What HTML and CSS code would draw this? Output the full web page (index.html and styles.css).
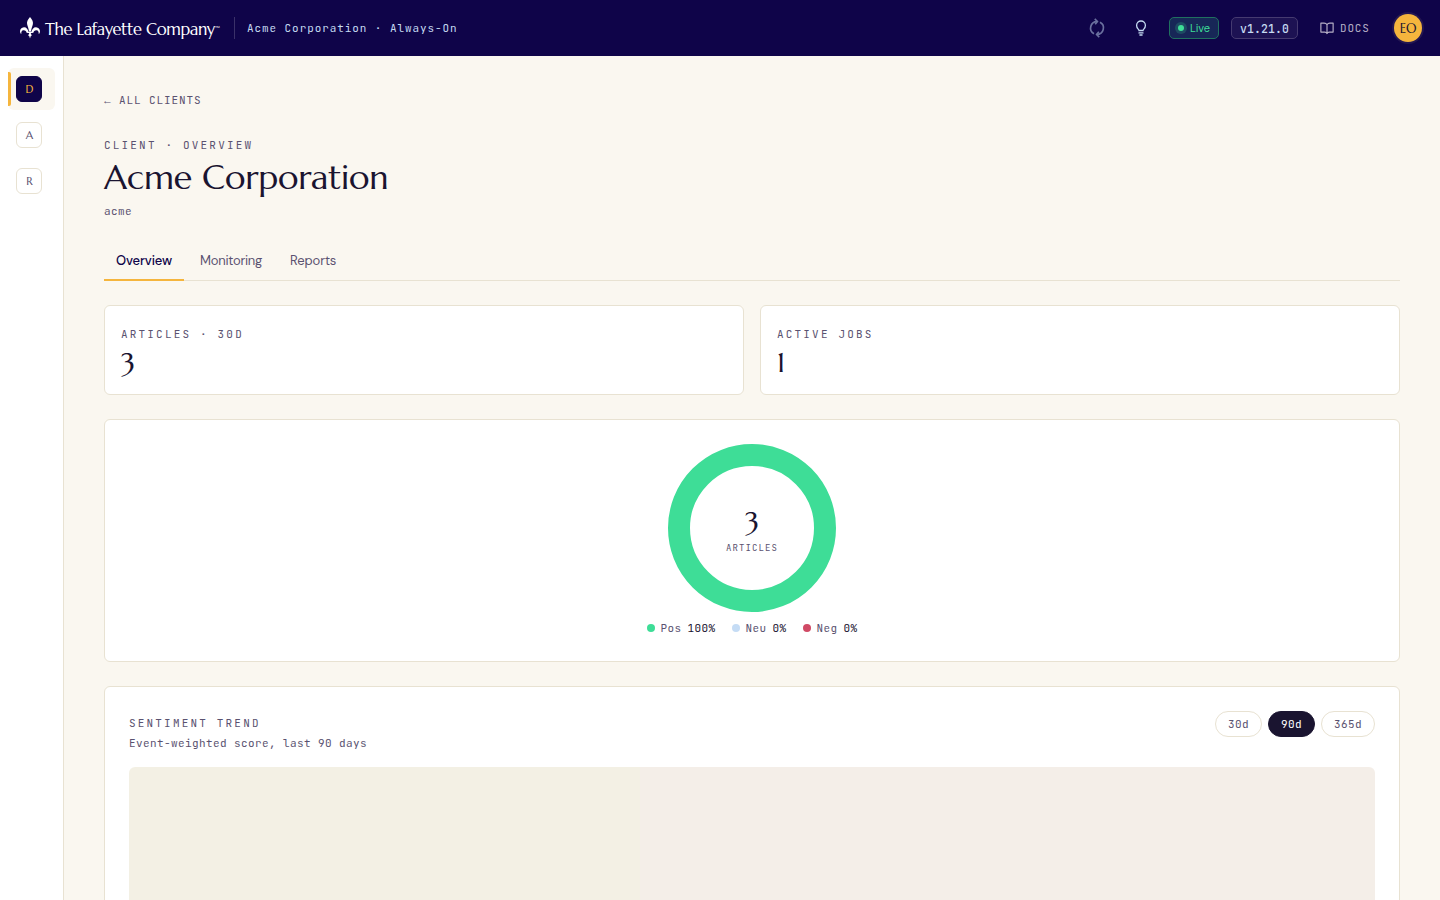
FILE: index.html
```html
<!DOCTYPE html>
<html lang="en">
<head>
    <meta charset="UTF-8">
    <title>Acme Corporation - The Lafayette Company</title>
    <link rel="stylesheet" href="styles.css">
</head>
<body>
    <header class="topbar">
        <a class="brand">
            <svg class="fleur" width="20" height="22" viewBox="0 0 20 22" fill="#fff">
                <path d="M10 0C7.700 2.800 6.500 5 7.200 7.500 7.700 9.500 8.600 11 9 14.500h2c.4-3.500 1.300-5 1.800-7C13.500 5 12.300 2.800 10 0z"/>
                <path d="M8.600 15.500C8.200 12 6.200 10 3.900 10.200 1.200 10.400-.6 13 .2 15.500c.2.700.6 1.200 1.100 1.500C1.200 15 1.700 13.400 3.400 13.300c2-.1 3 1.200 3.400 2.800z"/>
                <path d="M11.400 15.500c.4-3.500 2.400-5.500 4.700-5.300 2.700.2 4.500 2.800 3.700 5.300-.2.700-.6 1.200-1.100 1.500.1-2-.4-3.600-2.100-3.700-2-.1-3 1.200-3.400 2.800z"/>
                <path d="M7.500 14.700h5v1.200h-5zM9.200 16h1.600c.1 1.300.6 1.800 1.200 2.200L10.800 19 10 21.500 9.200 19 8 18.200c.6-.4 1.100-.9 1.200-2.200z"/>
            </svg>
            <span class="brand-name">The Lafayette Company</span><span class="tm">™</span>
        </a>
        <span class="context">Acme Corporation · Always-On</span>
        <div class="actions">
            <button class="icon-btn sync">
                <svg width="20" height="20" viewBox="0 0 24 24" fill="none" stroke="currentColor" stroke-width="2">
                    <path d="M12 4.300A7.700 7.700 0 0 0 8.400 18.800M12 19.700A7.700 7.700 0 0 0 15.600 5.200"/>
                    <path d="M9.300 1l3.200 3.200-2.700 3.400M14.700 23l-3.200-3.200 2.700-3.400"/>
                </svg>
            </button>
            <button class="icon-btn">
                <svg width="16" height="16" viewBox="0 0 16 16" fill="none" stroke="currentColor" stroke-width="1.300" stroke-linecap="round">
                    <path d="M6 10.500C6 9.200 3.600 8.500 3.600 5.400a4.400 4.400 0 0 1 8.800 0C12.400 8.500 10 9.200 10 10.500zM6 12.900h4M6.900 15h2.200"/>
                </svg>
            </button>
            <span class="live"><i class="live-dot"></i>Live</span>
            <span class="version">v1.21.0</span>
            <a class="docs">
                <svg width="14" height="14" viewBox="0 0 24 24" fill="none" stroke="currentColor" stroke-width="2" stroke-linejoin="round">
                    <path d="M12 6.500C11 4.500 9 3.500 7 3.500H1.500v15.500H8c2 0 3.500.8 4 2.500.5-1.700 2-2.500 4-2.500h6.500V3.500H17c-2 0-4 1-5 3zM12 6.500v15"/>
                </svg>
                DOCS
            </a>
            <span class="avatar">EO</span>
        </div>
    </header>

    <div class="shell">
        <nav class="sidebar">
            <a class="side-item active"><span class="side-letter">D</span></a>
            <a class="side-item"><span class="side-letter">A</span></a>
            <a class="side-item"><span class="side-letter">R</span></a>
        </nav>

        <main class="content">
            <a class="back"><span class="arrow">←</span> ALL CLIENTS</a>
            <div class="label">CLIENT · OVERVIEW</div>
            <h1>Acme Corporation</h1>
            <div class="slug">acme</div>

            <div class="tabs">
                <a class="tab active">Overview</a>
                <a class="tab monitoring">Monitoring</a>
                <a class="tab">Reports</a>
            </div>

            <div class="stats">
                <div class="card stat">
                    <div class="label">ARTICLES · 30D</div>
                    <div class="stat-value">3</div>
                </div>
                <div class="card stat">
                    <div class="label">ACTIVE JOBS</div>
                    <div class="stat-value">1</div>
                </div>
            </div>

            <div class="card mix">
                <div class="donut">
                    <span class="donut-value">3</span>
                    <span class="donut-label">ARTICLES</span>
                </div>
                <div class="legend">
                    <span class="key"><i class="dot pos"></i>Pos <b>100%</b></span>
                    <span class="key"><i class="dot neu"></i>Neu <b>0%</b></span>
                    <span class="key"><i class="dot neg"></i>Neg <b>0%</b></span>
                </div>
            </div>

            <div class="card trend">
                <div class="trend-head">
                    <div>
                        <div class="label">SENTIMENT TREND</div>
                        <div class="trend-sub">Event-weighted score, last 90 days</div>
                    </div>
                    <div class="ranges">
                        <button class="range">30d</button>
                        <button class="range active">90d</button>
                        <button class="range">365d</button>
                    </div>
                </div>
                <div class="chart"></div>
            </div>
        </main>
    </div>
</body>
</html>
```

FILE: styles.css
```css
:root {
    --navy: #0f0449;
    --ink: #1a1430;
    --muted: #5a5270;
    --cream: #faf7f0;
    --line: #e8e2d2;
    --gold: #f5b53d;
    --green: #3edd97;
    --mono: "JetBrains Mono", "DejaVu Sans Mono", monospace;
    --serif: "Marcellus", "Liberation Serif", serif;
    --sans: "DM Sans", "Inter", sans-serif;
}

* {
    box-sizing: border-box;
}

body {
    margin: 0;
    height: 100vh;
    overflow: hidden;
    background: var(--cream);
    color: var(--ink);
    font-family: var(--sans);
}

button {
    font: inherit;
    background: none;
    border: none;
    padding: 0;
}

svg {
    display: block;
    flex-shrink: 0;
}

/* top bar */
.topbar {
    display: flex;
    align-items: center;
    height: 56px;
    padding: 0 18px 0 20px;
    background: var(--navy);
    color: #c5dbf2;
}

.brand {
    display: flex;
    align-items: center;
    width: 215px;
    height: 22px;
    border-right: 1px solid rgba(255,255,255,0.18);
    color: white;
    font-family: var(--serif);
}

.brand-name {
    margin-left: 5px;
    font-size: 16.5px;
    line-height: 22px;
    white-space: nowrap;
    letter-spacing: -0.4px;
    padding-top: 3px;
}

.tm {
    font-size: 7px;
}

.context {
    margin-left: 12px;
    font-family: var(--mono);
    font-size: 11px;
    letter-spacing: 0.92px;
}

.actions {
    display: flex;
    align-items: center;
    margin-left: auto;
}

.icon-btn {
    display: grid;
    place-items: center;
    width: 32px;
    height: 32px;
    margin-right: 12px;
    color: #c5dbf2;
}

.sync {
    opacity: 0.5;
}

.live,
.version {
    display: flex;
    align-items: center;
    height: 22px;
    border-radius: 5px;
    margin-right: 12px;
}

.live {
    width: 50px;
    padding-left: 8px;
    gap: 6px;
    border: 1px solid #20705f;
    background: #172757;
    color: var(--green);
    font-size: 11px;
    letter-spacing: -0.1px;
}

.live-dot {
    width: 6px;
    height: 6px;
    border-radius: 50%;
    background: var(--green);
    box-shadow: 0 0 0 3px rgba(62,221,151,0.2);
}

.version {
    width: 67px;
    padding-left: 8px;
    border: 1px solid #453a70;
    background: #1d1253;
    font-family: var(--mono);
    font-size: 11.5px;
    font-weight: 500;
    letter-spacing: 0.12px;
}

.docs {
    display: flex;
    align-items: center;
    gap: 6px;
    width: 68px;
    margin: 0 6px 0 10px;
    color: #b5aec5;
    font-family: var(--mono);
    font-size: 11px;
    letter-spacing: 0.8px;
}

.avatar {
    width: 28px;
    height: 28px;
    border-radius: 50%;
    background: var(--gold);
    box-shadow: 0 0 0 2px #241751;
    color: var(--ink);
    font-family: var(--serif);
    font-size: 13px;
    line-height: 29px;
    letter-spacing: -0.3px;
    text-align: center;
}

/* page shell */
.shell {
    display: flex;
    height: calc(100vh - 56px);
}

.sidebar {
    display: flex;
    flex-direction: column;
    gap: 4px;
    width: 64px;
    padding: 12px 8px;
    border-right: 1px solid var(--line);
    background: white;
}

.side-item {
    height: 42px;
    padding: 8px;
    border-radius: 6px;
}

.side-item.active {
    position: relative;
    background: var(--cream);
}

.side-item.active::before {
    content: "";
    position: absolute;
    left: 0;
    top: 4px;
    width: 3px;
    height: 34px;
    border-radius: 0 2px 2px 0;
    background: var(--gold);
}

.side-letter {
    display: block;
    width: 26px;
    height: 26px;
    padding-left: 1px;
    border: 1px solid var(--line);
    border-radius: 6px;
    color: var(--muted);
    font-family: var(--serif);
    font-size: 11px;
    line-height: 25px;
    text-align: center;
}

.active .side-letter {
    border-color: var(--navy);
    background: var(--navy);
    color: var(--gold);
}

.content {
    flex: 1;
    min-width: 0;
    padding: 36px 40px 0;
    overflow: hidden;
}

.back {
    display: block;
    height: 17px;
    margin-bottom: 28px;
    color: var(--muted);
    font-family: var(--mono);
    font-size: 11px;
    line-height: 17px;
    letter-spacing: 0.9px;
}

.arrow {
    font-family: "Liberation Mono", monospace;
    font-weight: bold;
}

.label {
    color: var(--muted);
    font-family: var(--mono);
    font-size: 11px;
    line-height: 17px;
    letter-spacing: 2.18px;
}

h1 {
    margin: 3px 0 4px;
    font-family: var(--serif);
    font-size: 34px;
    font-weight: 400;
    line-height: 42px;
    letter-spacing: -0.17px;
}

.slug {
    color: var(--muted);
    font-family: var(--mono);
    font-size: 11px;
    line-height: 17px;
    letter-spacing: 0.44px;
}

.tabs {
    display: flex;
    gap: 4px;
    height: 39px;
    margin-top: 22px;
    border-bottom: 1px solid var(--line);
}

.tab {
    height: 39px;
    padding: 0 12px;
    color: var(--muted);
    font-size: 13px;
    line-height: 37px;
    letter-spacing: -0.12px;
}

.tab.monitoring {
    letter-spacing: -0.24px;
}

.tab.active {
    border-bottom: 2px solid var(--gold);
    color: var(--navy);
    font-weight: 500;
}

/* cards */
.card {
    border: 1px solid var(--line);
    border-radius: 6px;
    background: white;
}

.stats {
    display: grid;
    grid-template-columns: 1fr 1fr;
    gap: 16px;
    margin: 24px 0;
}

.stat {
    height: 90px;
    padding: 20px 16px;
}

.stat-value {
    font-family: var(--serif);
    font-size: 28px;
    line-height: 40px;
}

.mix {
    height: 243px;
    padding-top: 24px;
}

.donut {
    display: flex;
    flex-direction: column;
    align-items: center;
    width: 168px;
    height: 168px;
    margin: 0 auto;
    padding-top: 38px;
    border: 22px solid var(--green);
    border-radius: 50%;
}

.donut-value {
    margin-bottom: 2px;
    font-family: var(--serif);
    font-size: 28px;
    line-height: 36px;
}

.donut-label {
    color: var(--muted);
    font-family: var(--mono);
    font-size: 9px;
    line-height: 12px;
    letter-spacing: 1.08px;
}

.legend {
    display: flex;
    justify-content: center;
    gap: 16px;
    margin-top: 8px;
    color: var(--muted);
    font-family: var(--mono);
    font-size: 11px;
    line-height: 17px;
    letter-spacing: 0.4px;
}

.key {
    display: flex;
    align-items: center;
    gap: 6px;
}

.key b {
    color: var(--ink);
    font-weight: 400;
}

.dot {
    width: 8px;
    height: 8px;
    margin-bottom: 1px;
    border-radius: 50%;
}

.pos { background: var(--green); }
.neu { background: #c5dcf5; }
.neg { background: #d04a65; }

/* trend */
.trend {
    height: 400px;
    margin-top: 24px;
    padding: 24px;
}

.trend-head {
    display: flex;
    justify-content: space-between;
    height: 56px;
}

.trend-head .label {
    margin: 4px 0 3px;
}

.trend-sub {
    color: var(--muted);
    font-family: var(--mono);
    font-size: 11px;
    line-height: 17px;
    letter-spacing: 0.4px;
}

.ranges {
    display: flex;
    gap: 6px;
    height: 26px;
}

.range {
    padding: 0 12px;
    border: 1px solid var(--line);
    border-radius: 13px;
    color: var(--muted);
    font-family: var(--mono);
    font-size: 11px;
    letter-spacing: 0.4px;
}

.range.active {
    border-color: var(--ink);
    background: var(--ink);
    color: white;
}

.chart {
    height: 280px;
    border-radius: 6px;
    background: linear-gradient(to right, #f3f0e4 41%, #f4eee8 41%);
}
```
